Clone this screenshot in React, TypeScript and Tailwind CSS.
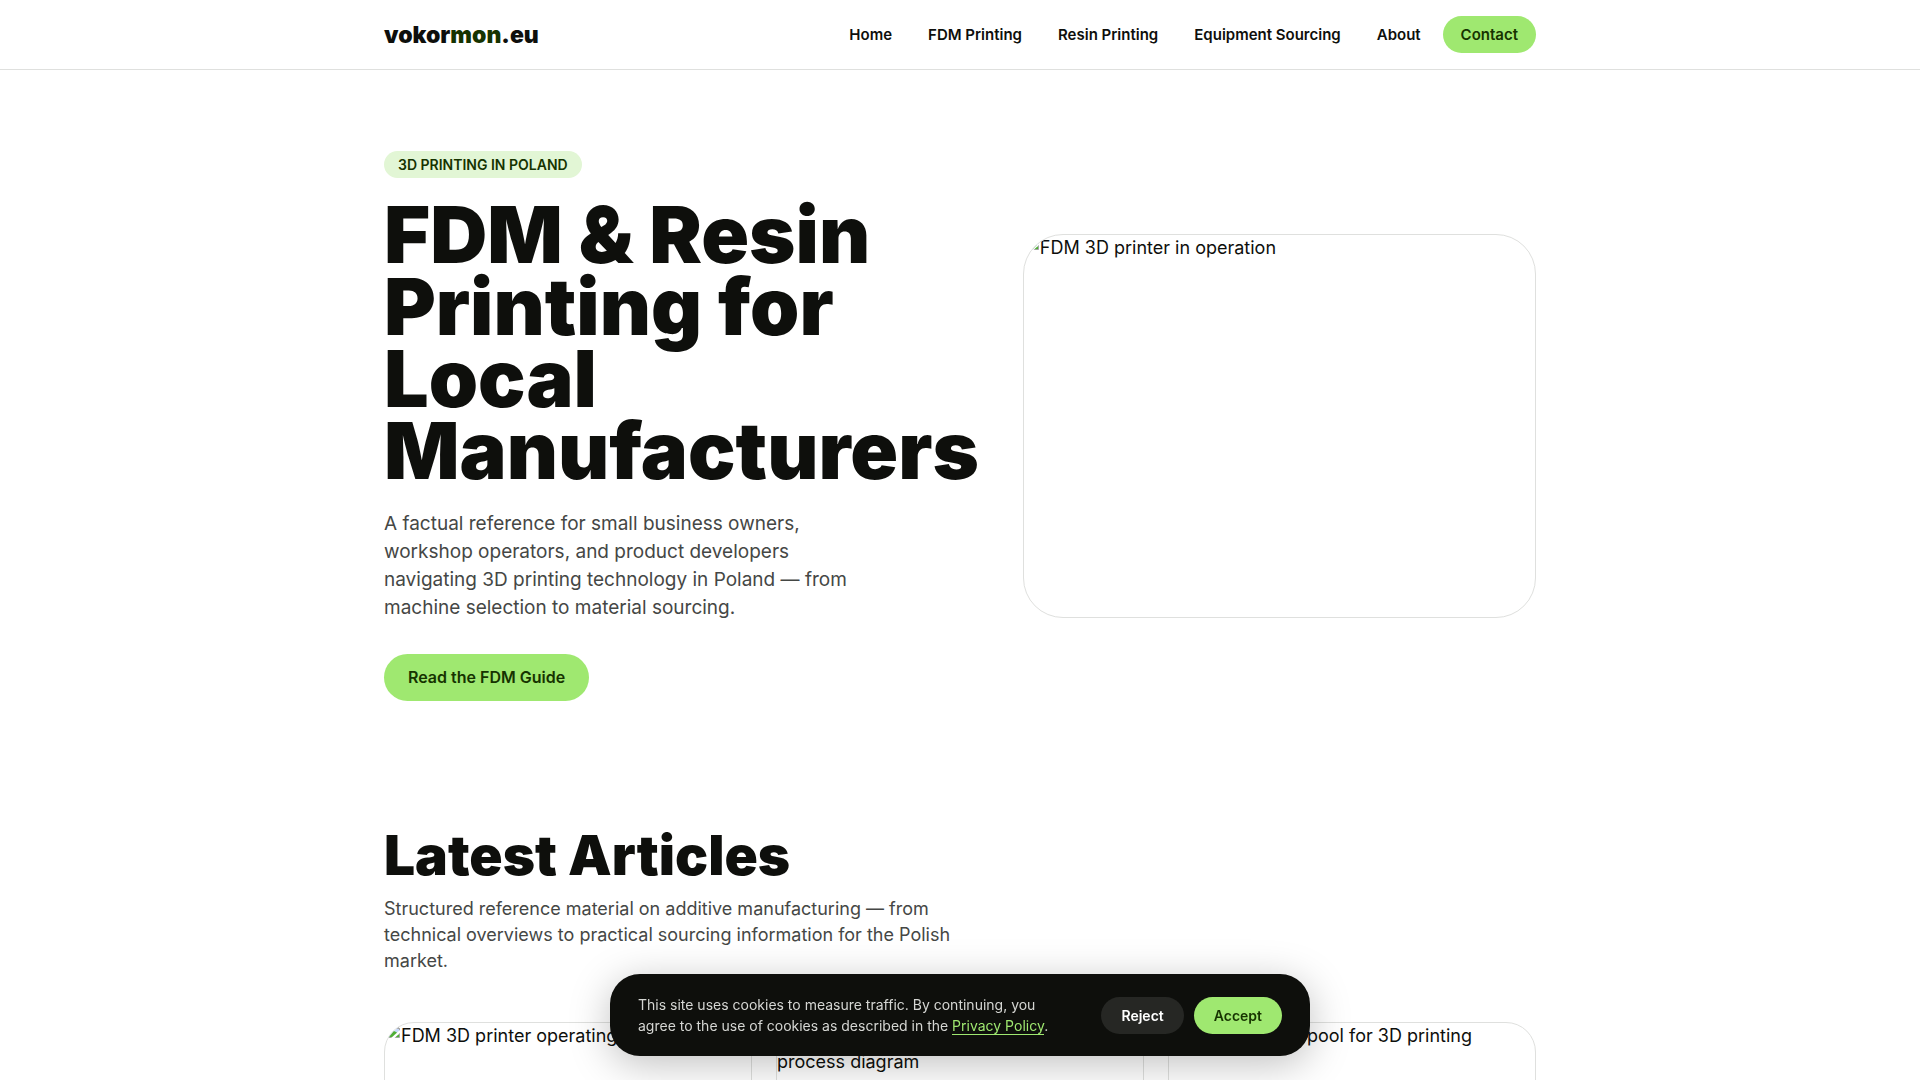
import React, { useState } from "react";

interface NavLink {
  label: string;
  href: string;
}

interface Article {
  id: number;
  alt: string;
}

const navLinks: NavLink[] = [
  { label: "Home", href: "#home" },
  { label: "FDM Printing", href: "#fdm" },
  { label: "Resin Printing", href: "#resin" },
  { label: "Equipment Sourcing", href: "#sourcing" },
  { label: "About", href: "#about" },
];

const articles: Article[] = [
  { id: 1, alt: "FDM 3D printer operating" },
  { id: 2, alt: "Stereolithography 3D resin printing process diagram" },
  { id: 3, alt: "PLA filament spool for 3D printing" },
];

const MissingImage: React.FC<{ alt: string }> = ({ alt }) => (
  <div>
    <svg className="inline-block w-4 h-4 align-[3px]" viewBox="0 0 16 16" aria-hidden="true">
      <path d="M1.5 1.5h9l4 4v9h-13z" fill="#c6d9fb" stroke="#a3a3a3" />
      <path d="M10.5 1.5v4h4z" fill="#fff" stroke="#a3a3a3" />
      <path d="M4 7.5a2 2 0 0 1 3-1.5 2 2 0 0 1 2 1.5z" fill="#fff" />
      <path d="M2 14v-2c2-3 4-4 6-4s4 1 6 4v2z" fill="#4fae35" />
      <path d="M5 16 16 6v3L8.5 16z" fill="#fff" />
    </svg>
    {alt}
  </div>
);

const Header: React.FC = () => (
  <header className="border-b border-[#dfe0de] bg-white">
    <div className="max-w-[1200px] mx-auto px-6 py-4 flex items-center justify-between">
      <a href="#home" className="text-[23px] leading-8 font-black">
        vokor<span className="text-[#163300]">mon</span>.eu
      </a>
      <nav className="flex items-center gap-2 text-[15px] leading-[21px] font-semibold">
        {navLinks.map((link) => (
          <a key={link.label} href={link.href} className="px-[14px] py-2">
            {link.label}
          </a>
        ))}
        <a
          href="#contact"
          className="px-[18px] py-2 rounded-full bg-[#9fe870] text-[#163300]"
        >
          Contact
        </a>
      </nav>
    </div>
  </header>
);

const Hero: React.FC = () => (
  <section className="max-w-[1200px] mx-auto px-6 py-[81px] grid grid-cols-[1fr_1fr] gap-11 items-center">
    <div>
      <span className="inline-block mb-5 px-[14px] py-1 rounded-full bg-[#e2f6d5] text-[#163300] text-sm leading-[19px] font-semibold uppercase">
        3D printing in Poland
      </span>
      <h1 className="text-[79px] leading-[72px] font-black">
        FDM &amp; Resin Printing for Local Manufacturers
      </h1>
      <p className="mt-6 mb-8 max-w-[480px] text-[19px] leading-7 text-[#454745]">
        A factual reference for small business owners, workshop operators, and product developers
        navigating 3D printing technology in Poland — from machine selection to material sourcing.
      </p>
      <a
        href="#fdm"
        className="inline-block px-6 py-3 rounded-full bg-[#9fe870] text-[#163300] text-base leading-[23px] font-semibold"
      >
        Read the FDM Guide
      </a>
    </div>
    <div className="aspect-[4/3] rounded-[40px] border border-[#dfe0de] overflow-hidden">
      <MissingImage alt="FDM 3D printer in operation" />
    </div>
  </section>
);

const LatestArticles: React.FC = () => (
  <section className="max-w-[1200px] mx-auto px-6 pt-12">
    <h2 className="text-[55px] leading-[50px] font-black">Latest Articles</h2>
    <p className="mt-4 mb-12 max-w-[600px] text-[#454745]">
      Structured reference material on additive manufacturing — from technical overviews to
      practical sourcing information for the Polish market.
    </p>
    <div className="grid grid-cols-3 gap-6">
      {articles.map((article) => (
        <article
          key={article.id}
          className="aspect-[16/9] rounded-[30px] border border-[#dfe0de] overflow-hidden"
        >
          <MissingImage alt={article.alt} />
        </article>
      ))}
    </div>
  </section>
);

const CookieBanner: React.FC = () => {
  const [visible, setVisible] = useState(true);

  if (!visible) return null;

  return (
    <div className="fixed bottom-6 left-1/2 -translate-x-1/2 w-[700px] max-w-full px-7 py-5 flex items-center justify-between gap-6 rounded-[30px] bg-[#0e0f0c] shadow-[0_8px_40px_rgba(0,0,0,0.25)] z-50">
      <p className="max-w-[420px] text-sm leading-[21px] text-[#d5d6d3]">
        This site uses cookies to measure traffic. By continuing, you agree to the use of cookies as
        described in the{" "}
        <a href="#privacy" className="text-[#9fe870] border-b border-[#9fe870]">
          Privacy Policy
        </a>
        .
      </p>
      <div className="flex shrink-0 gap-[10px] text-sm leading-[21px] font-semibold">
        <button
          className="px-5 py-2 rounded-full bg-[#262724] text-white"
          onClick={() => setVisible(false)}
        >
          Reject
        </button>
        <button
          className="px-5 py-2 rounded-full bg-[#9fe870] text-[#163300]"
          onClick={() => setVisible(false)}
        >
          Accept
        </button>
      </div>
    </div>
  );
};

const App: React.FC = () => {
  return (
    <div className="h-screen overflow-hidden bg-white text-[#0e0f0c] font-['Inter',sans-serif] text-lg leading-[26px]">
      <Header />
      <main>
        <Hero />
        <LatestArticles />
      </main>
      <CookieBanner />
    </div>
  );
};

export default App;
